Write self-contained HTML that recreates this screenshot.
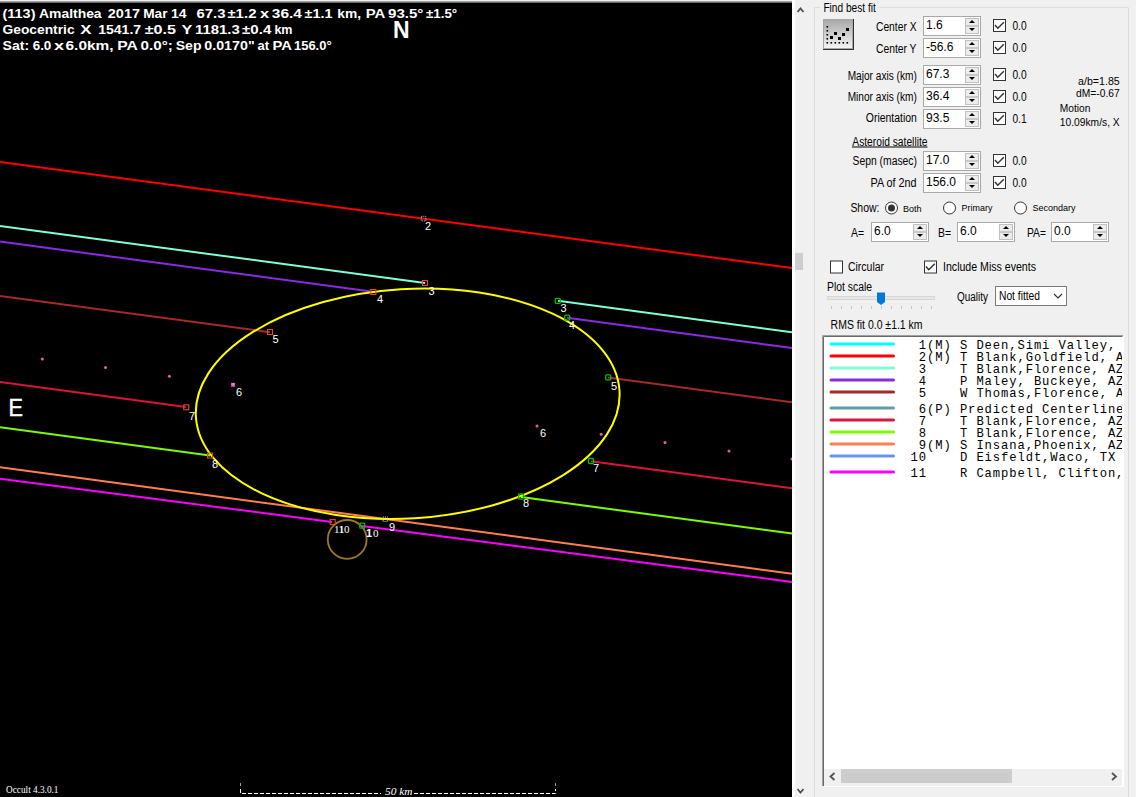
<!DOCTYPE html>
<html><head><meta charset="utf-8">
<style>
html,body{margin:0;padding:0;}
body{width:1136px;height:797px;overflow:hidden;position:relative;background:#f0f0f0;font-family:"Liberation Sans",sans-serif;}
#plot{position:absolute;left:0;top:0;width:792px;height:797px;background:#000;}
#plot svg{position:absolute;left:0;top:0;}
.a{position:absolute;}
</style></head><body>
<div id="plot"><svg width="792" height="797" viewBox="0 0 792 797" font-family="Liberation Sans"><rect x="0" y="0" width="792" height="1" fill="#f0f0f0"/>
<rect x="0" y="1" width="792" height="1" fill="#a0a0a0"/>
<rect x="0" y="2" width="792" height="1" fill="#696969"/>
<line x1="0" y1="162.0" x2="792" y2="268.1" stroke="#ff0000" stroke-width="2"/>
<line x1="0" y1="226.0" x2="425" y2="283.0" stroke="#7fffd4" stroke-width="2"/>
<line x1="558" y1="300.8" x2="792" y2="332.2" stroke="#7fffd4" stroke-width="2"/>
<line x1="0" y1="241.6" x2="373" y2="291.7" stroke="#8a2be2" stroke-width="2"/>
<line x1="567" y1="317.8" x2="792" y2="348.0" stroke="#8a2be2" stroke-width="2"/>
<line x1="0" y1="296.0" x2="270" y2="332.2" stroke="#a52a2a" stroke-width="2"/>
<line x1="608" y1="377.6" x2="792" y2="402.3" stroke="#a52a2a" stroke-width="2"/>
<line x1="0" y1="382.0" x2="186" y2="406.9" stroke="#dc143c" stroke-width="2"/>
<line x1="591" y1="461.2" x2="792" y2="488.2" stroke="#dc143c" stroke-width="2"/>
<line x1="0" y1="427.2" x2="210" y2="455.4" stroke="#7cfc00" stroke-width="2"/>
<line x1="521" y1="497.1" x2="792" y2="533.5" stroke="#7cfc00" stroke-width="2"/>
<line x1="0" y1="467.2" x2="792" y2="573.8" stroke="#ff7f50" stroke-width="2"/>
<line x1="0" y1="478.7" x2="332" y2="522.0" stroke="#ff00ff" stroke-width="2"/>
<line x1="362" y1="525.9" x2="792" y2="581.9" stroke="#ff00ff" stroke-width="2"/>
<ellipse cx="407.7" cy="403.75" rx="212.2" ry="114.7" transform="rotate(-3.5 407.7 403.75)" fill="none" stroke="#ffff00" stroke-width="2"/>
<circle cx="347.2" cy="539.4" r="19.4" fill="none" stroke="#a07828" stroke-width="1.8"/>
<g fill="#e060b0"><circle cx="42.3" cy="359" r="1.5"/><circle cx="105.5" cy="367.5" r="1.5"/><circle cx="169.4" cy="376.2" r="1.5"/><circle cx="537" cy="426" r="1.5"/><circle cx="601.2" cy="434.2" r="1.5"/><circle cx="665" cy="442.5" r="1.5"/><circle cx="729" cy="451" r="1.5"/><circle cx="792" cy="459" r="1.5"/></g>
<rect x="231.3" y="383" width="3.5" height="3.5" fill="#f070c0" stroke="#c0c0ff" stroke-width="0.5" stroke-dasharray="1 1"/>
<rect x="421.3" y="216.3" width="4.5" height="4.5" fill="none" stroke="#a8d0f0" stroke-width="1" stroke-dasharray="1 1"/>
<rect x="383" y="517" width="4.5" height="4.5" fill="none" stroke="#a8d0f0" stroke-width="1" stroke-dasharray="1 1"/>
<g fill="none" stroke="#e04828" stroke-width="1.1"><rect x="422.5" y="280.5" width="5" height="5"/><rect x="370.8" y="289.5" width="5" height="5"/><rect x="267.5" y="329.5" width="5" height="5"/><rect x="183.8" y="404.8" width="5" height="5"/><rect x="207.5" y="453.0" width="5" height="5"/><rect x="330.2" y="519.5" width="5" height="5"/></g>
<g fill="none" stroke="#00c000" stroke-width="1.3"><rect x="555.3" y="298.4" width="5" height="5" rx="1"/><rect x="564.7" y="315.2" width="5" height="5" rx="1"/><rect x="605.7" y="374.9" width="5" height="5" rx="1"/><rect x="588.5" y="458.5" width="5" height="5" rx="1"/><rect x="518.5" y="494.0" width="5" height="5" rx="1"/><rect x="359.7" y="523.2" width="5" height="5" rx="1"/></g>
<g fill="#fff" font-size="11"><text x="425" y="229.8">2</text><text x="428.5" y="295">3</text><text x="377" y="303">4</text><text x="272.5" y="343">5</text><text x="236" y="396">6</text><text x="189" y="420">7</text><text x="212" y="468">8</text><text x="560.5" y="311.8">3</text><text x="569" y="329">4</text><text x="611" y="390">5</text><text x="540" y="437">6</text><text x="593" y="472">7</text><text x="523" y="507">8</text><text x="389" y="530.5">9</text></g>
<g fill="#fff" font-family="Liberation Serif" font-size="11"><text x="334" y="532.5">11</text><text x="338.5" y="532.5">10</text><text x="373" y="536.5">0</text></g>
<text x="366" y="536.5" fill="#fff" font-size="11" font-weight="bold">1</text>
<g fill="#fff" font-weight="bold" font-size="13">
<text x="2.5" y="18" textLength="33.0" lengthAdjust="spacingAndGlyphs">(113)</text>
<text x="39.1" y="18" textLength="62.5" lengthAdjust="spacingAndGlyphs">Amalthea</text>
<text x="107.8" y="18" textLength="32.2" lengthAdjust="spacingAndGlyphs">2017</text>
<text x="143.2" y="18" textLength="24.400000000000002" lengthAdjust="spacingAndGlyphs">Mar</text>
<text x="171.1" y="18" textLength="15.5" lengthAdjust="spacingAndGlyphs">14</text>
<text x="196.5" y="18" textLength="29.1" lengthAdjust="spacingAndGlyphs">67.3</text>
<text x="227.4" y="18" textLength="29.1" lengthAdjust="spacingAndGlyphs">±1.2</text>
<text x="260.1" y="18" textLength="9.1" lengthAdjust="spacingAndGlyphs">x</text>
<text x="271.8" y="18" textLength="30.1" lengthAdjust="spacingAndGlyphs">36.4</text>
<text x="304.5" y="18" textLength="28.1" lengthAdjust="spacingAndGlyphs">±1.1</text>
<text x="337.3" y="18" textLength="23.8" lengthAdjust="spacingAndGlyphs">km,</text>
<text x="365.8" y="18" textLength="19.6" lengthAdjust="spacingAndGlyphs">PA</text>
<text x="388" y="18" textLength="35.4" lengthAdjust="spacingAndGlyphs">93.5°</text>
<text x="426" y="18" textLength="31.200000000000003" lengthAdjust="spacingAndGlyphs">±1.5°</text>
<text x="2.5" y="33.7" textLength="72.1" lengthAdjust="spacingAndGlyphs">Geocentric</text>
<text x="80.3" y="33.7" textLength="11.2" lengthAdjust="spacingAndGlyphs">X</text>
<text x="98.2" y="33.7" textLength="42.9" lengthAdjust="spacingAndGlyphs">1541.7</text>
<text x="144.7" y="33.7" textLength="31.3" lengthAdjust="spacingAndGlyphs">±0.5</text>
<text x="181.4" y="33.7" textLength="10.9" lengthAdjust="spacingAndGlyphs">Y</text>
<text x="195" y="33.7" textLength="44.800000000000004" lengthAdjust="spacingAndGlyphs">1181.3</text>
<text x="242.1" y="33.7" textLength="29.200000000000003" lengthAdjust="spacingAndGlyphs">±0.4</text>
<text x="274.4" y="33.7" textLength="18.1" lengthAdjust="spacingAndGlyphs">km</text>
<text x="2.5" y="49.7" textLength="26.6" lengthAdjust="spacingAndGlyphs">Sat:</text>
<text x="32.7" y="49.7" textLength="18.6" lengthAdjust="spacingAndGlyphs">6.0</text>
<text x="53.9" y="49.7" textLength="10.1" lengthAdjust="spacingAndGlyphs">x</text>
<text x="65.5" y="49.7" textLength="48.1" lengthAdjust="spacingAndGlyphs">6.0km,</text>
<text x="117.3" y="49.7" textLength="20.6" lengthAdjust="spacingAndGlyphs">PA</text>
<text x="140.5" y="49.7" textLength="32.3" lengthAdjust="spacingAndGlyphs">0.0°;</text>
<text x="175.7" y="49.7" textLength="25.8" lengthAdjust="spacingAndGlyphs">Sep</text>
<text x="204.3" y="49.7" textLength="50.4" lengthAdjust="spacingAndGlyphs">0.0170&quot;</text>
<text x="257.5" y="49.7" textLength="11.5" lengthAdjust="spacingAndGlyphs">at</text>
<text x="272.4" y="49.7" textLength="19.5" lengthAdjust="spacingAndGlyphs">PA</text>
<text x="294" y="49.7" textLength="37.6" lengthAdjust="spacingAndGlyphs">156.0°</text>
</g>
<text x="393" y="38" fill="#fff" font-weight="bold" font-size="23">N</text>
<text x="8.6" y="416" fill="#fff" stroke="#fff" stroke-width="0.5" font-size="23" textLength="14.4" lengthAdjust="spacingAndGlyphs">E</text>
<text x="6" y="792.7" fill="#fff" font-family="Liberation Serif" font-size="10" textLength="52.5" lengthAdjust="spacingAndGlyphs">Occult 4.3.0.1</text>
<g fill="none" stroke-width="1"><path d="M240.5 783 V788" stroke="#a0a0a0" stroke-dasharray="3 2"/><path d="M555.5 783 V788" stroke="#a0a0a0" stroke-dasharray="3 2"/><path d="M240.5 789 V793.5 H381" stroke="#fff" stroke-dasharray="4 2"/><path d="M414 793.5 H555.5 V789" stroke="#fff" stroke-dasharray="4 2"/></g>
<text x="385" y="795.4" fill="#fff" font-family="Liberation Serif" font-style="italic" font-size="11" textLength="27.6" lengthAdjust="spacingAndGlyphs">50 km</text></svg></div><svg class="a" style="left:0;top:0" width="1136" height="797" font-family="Liberation Sans"><rect x="792" y="0" width="3" height="797" fill="#fff"/>
<rect x="795" y="253" width="8" height="17" fill="#cdcdcd"/>
<path d="M797.5 12 L800.5 8.5 L803.5 12" fill="none" stroke="#505050" stroke-width="1.8"/>
<path d="M797.5 789 L800.5 792.5 L803.5 789" fill="none" stroke="#505050" stroke-width="1.8"/>
<path d="M814.5 797 V7.5 H820 M879 7.5 H1128.5 V797" fill="none" stroke="#dcdcdc"/>
<text x="823.4" y="11.9" font-size="12" text-anchor="start" fill="#000" textLength="52.4" lengthAdjust="spacingAndGlyphs">Find best fit</text>
<rect x="823" y="19" width="31" height="31" fill="#303030"/><rect x="823" y="19" width="30" height="30" fill="#a8a8a8"/>
<defs><linearGradient id="bg" x1="0" y1="0" x2="0" y2="1"><stop offset="0" stop-color="#a8a8a8"/><stop offset="1" stop-color="#f4f4f4"/></linearGradient></defs>
<rect x="824" y="20" width="28" height="28" fill="url(#bg)"/>
<g fill="#000"><rect x="826.5" y="26" width="1.6" height="1.6"/><rect x="826.5" y="30" width="1.6" height="1.6"/><rect x="826.5" y="34" width="1.6" height="1.6"/><rect x="826.5" y="38" width="1.6" height="1.6"/><rect x="826.5" y="42" width="1.6" height="1.6"/><rect x="830.5" y="42" width="1.6" height="1.6"/><rect x="834.5" y="42" width="1.6" height="1.6"/><rect x="838.5" y="42" width="1.6" height="1.6"/><rect x="842.5" y="42" width="1.6" height="1.6"/><rect x="846.5" y="42" width="1.6" height="1.6"/><rect x="830" y="36" width="3" height="3"/><rect x="834" y="32" width="3" height="3"/><rect x="838" y="37" width="3" height="3"/><rect x="842" y="33" width="3" height="3"/><rect x="846" y="28" width="3" height="3"/></g>
<text x="876.0" y="30.6" font-size="12" text-anchor="start" fill="#000" textLength="40.5" lengthAdjust="spacingAndGlyphs">Center X</text>
<text x="876.0" y="52.6" font-size="12" text-anchor="start" fill="#000" textLength="40.5" lengthAdjust="spacingAndGlyphs">Center Y</text>
<text x="847.7" y="79.5" font-size="12" text-anchor="start" fill="#000" textLength="69.1" lengthAdjust="spacingAndGlyphs">Major axis (km)</text>
<text x="847.7" y="101.3" font-size="12" text-anchor="start" fill="#000" textLength="69.1" lengthAdjust="spacingAndGlyphs">Minor axis (km)</text>
<text x="865.8" y="122.3" font-size="12" text-anchor="start" fill="#000" textLength="51" lengthAdjust="spacingAndGlyphs">Orientation</text>
<rect x="923.5" y="16.5" width="57" height="19" fill="#fff" stroke="#a9a9a9"/>
<rect x="965.5" y="18.5" width="13" height="15" fill="#ececec" stroke="#c0c0c0"/>
<rect x="966" y="25" width="12" height="2" fill="#c8c8c8"/>
<path d="M969 23 L972 20 L975 23 Z" fill="#000"/>
<path d="M969 28 L972 31 L975 28 Z" fill="#000"/>
<text x="926" y="29" font-size="12" text-anchor="start" fill="#000">1.6</text>
<rect x="993.5" y="19.5" width="12" height="12" fill="#fff" stroke="#333"/>
<path d="M995 25 L997.8 28.2 L1003.8 22.3" fill="none" stroke="#333" stroke-width="1.5"/>
<text x="1012.4" y="29.7" font-size="12" text-anchor="start" fill="#000" textLength="14.2" lengthAdjust="spacingAndGlyphs">0.0</text>
<rect x="923.5" y="38.5" width="57" height="19" fill="#fff" stroke="#a9a9a9"/>
<rect x="965.5" y="40.5" width="13" height="15" fill="#ececec" stroke="#c0c0c0"/>
<rect x="966" y="47" width="12" height="2" fill="#c8c8c8"/>
<path d="M969 45 L972 42 L975 45 Z" fill="#000"/>
<path d="M969 50 L972 53 L975 50 Z" fill="#000"/>
<text x="926" y="51" font-size="12" text-anchor="start" fill="#000">-56.6</text>
<rect x="993.5" y="41.5" width="12" height="12" fill="#fff" stroke="#333"/>
<path d="M995 47 L997.8 50.2 L1003.8 44.3" fill="none" stroke="#333" stroke-width="1.5"/>
<text x="1012.4" y="51.7" font-size="12" text-anchor="start" fill="#000" textLength="14.2" lengthAdjust="spacingAndGlyphs">0.0</text>
<rect x="923.5" y="65.5" width="57" height="19" fill="#fff" stroke="#a9a9a9"/>
<rect x="965.5" y="67.5" width="13" height="15" fill="#ececec" stroke="#c0c0c0"/>
<rect x="966" y="74" width="12" height="2" fill="#c8c8c8"/>
<path d="M969 72 L972 69 L975 72 Z" fill="#000"/>
<path d="M969 77 L972 80 L975 77 Z" fill="#000"/>
<text x="926" y="78" font-size="12" text-anchor="start" fill="#000">67.3</text>
<rect x="993.5" y="68.5" width="12" height="12" fill="#fff" stroke="#333"/>
<path d="M995 74 L997.8 77.2 L1003.8 71.3" fill="none" stroke="#333" stroke-width="1.5"/>
<text x="1012.4" y="78.7" font-size="12" text-anchor="start" fill="#000" textLength="14.2" lengthAdjust="spacingAndGlyphs">0.0</text>
<rect x="923.5" y="87.5" width="57" height="19" fill="#fff" stroke="#a9a9a9"/>
<rect x="965.5" y="89.5" width="13" height="15" fill="#ececec" stroke="#c0c0c0"/>
<rect x="966" y="96" width="12" height="2" fill="#c8c8c8"/>
<path d="M969 94 L972 91 L975 94 Z" fill="#000"/>
<path d="M969 99 L972 102 L975 99 Z" fill="#000"/>
<text x="926" y="100" font-size="12" text-anchor="start" fill="#000">36.4</text>
<rect x="993.5" y="90.5" width="12" height="12" fill="#fff" stroke="#333"/>
<path d="M995 96 L997.8 99.2 L1003.8 93.3" fill="none" stroke="#333" stroke-width="1.5"/>
<text x="1012.4" y="100.7" font-size="12" text-anchor="start" fill="#000" textLength="14.2" lengthAdjust="spacingAndGlyphs">0.0</text>
<rect x="923.5" y="109.5" width="57" height="19" fill="#fff" stroke="#a9a9a9"/>
<rect x="965.5" y="111.5" width="13" height="15" fill="#ececec" stroke="#c0c0c0"/>
<rect x="966" y="118" width="12" height="2" fill="#c8c8c8"/>
<path d="M969 116 L972 113 L975 116 Z" fill="#000"/>
<path d="M969 121 L972 124 L975 121 Z" fill="#000"/>
<text x="926" y="122" font-size="12" text-anchor="start" fill="#000">93.5</text>
<rect x="993.5" y="112.5" width="12" height="12" fill="#fff" stroke="#333"/>
<path d="M995 118 L997.8 121.2 L1003.8 115.3" fill="none" stroke="#333" stroke-width="1.5"/>
<text x="1012.4" y="122.7" font-size="12" text-anchor="start" fill="#000" textLength="14.2" lengthAdjust="spacingAndGlyphs">0.1</text>
<text x="1078.1" y="84.7" font-size="10.5" text-anchor="start" fill="#000" textLength="41.6" lengthAdjust="spacingAndGlyphs">a/b=1.85</text>
<text x="1076.1" y="97.3" font-size="10.5" text-anchor="start" fill="#000" textLength="43.6" lengthAdjust="spacingAndGlyphs">dM=-0.67</text>
<text x="1059.8" y="112.4" font-size="10.5" text-anchor="start" fill="#000" textLength="30.6" lengthAdjust="spacingAndGlyphs">Motion</text>
<text x="1059.8" y="126.3" font-size="10.5" text-anchor="start" fill="#000" textLength="59.9" lengthAdjust="spacingAndGlyphs">10.09km/s, X</text>
<text x="852.3" y="145.5" font-size="12" text-anchor="start" fill="#000" textLength="75.2" lengthAdjust="spacingAndGlyphs">Asteroid satellite</text>
<rect x="852" y="146.5" width="75.5" height="1" fill="#000"/>
<text x="852.5" y="164.5" font-size="12" text-anchor="start" fill="#000" textLength="64.5" lengthAdjust="spacingAndGlyphs">Sepn (masec)</text>
<text x="870.5" y="187" font-size="12" text-anchor="start" fill="#000" textLength="46" lengthAdjust="spacingAndGlyphs">PA of 2nd</text>
<rect x="923.5" y="151.5" width="57" height="19" fill="#fff" stroke="#a9a9a9"/>
<rect x="965.5" y="153.5" width="13" height="15" fill="#ececec" stroke="#c0c0c0"/>
<rect x="966" y="160" width="12" height="2" fill="#c8c8c8"/>
<path d="M969 158 L972 155 L975 158 Z" fill="#000"/>
<path d="M969 163 L972 166 L975 163 Z" fill="#000"/>
<text x="926" y="164" font-size="12" text-anchor="start" fill="#000">17.0</text>
<rect x="993.5" y="154.5" width="12" height="12" fill="#fff" stroke="#333"/>
<path d="M995 160 L997.8 163.2 L1003.8 157.3" fill="none" stroke="#333" stroke-width="1.5"/>
<text x="1012.4" y="164.7" font-size="12" text-anchor="start" fill="#000" textLength="14.2" lengthAdjust="spacingAndGlyphs">0.0</text>
<rect x="923.5" y="173.5" width="57" height="19" fill="#fff" stroke="#a9a9a9"/>
<rect x="965.5" y="175.5" width="13" height="15" fill="#ececec" stroke="#c0c0c0"/>
<rect x="966" y="182" width="12" height="2" fill="#c8c8c8"/>
<path d="M969 180 L972 177 L975 180 Z" fill="#000"/>
<path d="M969 185 L972 188 L975 185 Z" fill="#000"/>
<text x="926" y="186" font-size="12" text-anchor="start" fill="#000">156.0</text>
<rect x="993.5" y="176.5" width="12" height="12" fill="#fff" stroke="#333"/>
<path d="M995 182 L997.8 185.2 L1003.8 179.3" fill="none" stroke="#333" stroke-width="1.5"/>
<text x="1012.4" y="186.7" font-size="12" text-anchor="start" fill="#000" textLength="14.2" lengthAdjust="spacingAndGlyphs">0.0</text>
<text x="850.4" y="212.2" font-size="12" text-anchor="start" fill="#000" textLength="29" lengthAdjust="spacingAndGlyphs">Show:</text>
<circle cx="891.5" cy="208.0" r="6" fill="#fff" stroke="#333" stroke-width="1"/>
<circle cx="891.5" cy="208.0" r="3.5" fill="#333"/>
<text x="903" y="211.5" font-size="9.5" text-anchor="start" fill="#000" textLength="18.5" lengthAdjust="spacingAndGlyphs">Both</text>
<circle cx="949.5" cy="208.0" r="6" fill="#fff" stroke="#333" stroke-width="1"/>
<text x="961.6" y="211.3" font-size="9.5" text-anchor="start" fill="#000" textLength="30.8" lengthAdjust="spacingAndGlyphs">Primary</text>
<circle cx="1020.5" cy="208.0" r="6" fill="#fff" stroke="#333" stroke-width="1"/>
<text x="1032.4" y="211.3" font-size="9.5" text-anchor="start" fill="#000" textLength="43.2" lengthAdjust="spacingAndGlyphs">Secondary</text>
<text x="851" y="236.6" font-size="12" text-anchor="start" fill="#000" textLength="13" lengthAdjust="spacingAndGlyphs">A=</text>
<text x="938" y="236.6" font-size="12" text-anchor="start" fill="#000" textLength="13" lengthAdjust="spacingAndGlyphs">B=</text>
<text x="1027" y="236.6" font-size="12" text-anchor="start" fill="#000" textLength="19" lengthAdjust="spacingAndGlyphs">PA=</text>
<rect x="871.5" y="222.5" width="57" height="19" fill="#fff" stroke="#a9a9a9"/>
<rect x="913.5" y="224.5" width="13" height="15" fill="#ececec" stroke="#c0c0c0"/>
<rect x="914" y="231" width="12" height="2" fill="#c8c8c8"/>
<path d="M917 229 L920 226 L923 229 Z" fill="#000"/>
<path d="M917 234 L920 237 L923 234 Z" fill="#000"/>
<text x="874" y="235" font-size="12" text-anchor="start" fill="#000">6.0</text>
<rect x="957.5" y="222.5" width="57" height="19" fill="#fff" stroke="#a9a9a9"/>
<rect x="999.5" y="224.5" width="13" height="15" fill="#ececec" stroke="#c0c0c0"/>
<rect x="1000" y="231" width="12" height="2" fill="#c8c8c8"/>
<path d="M1003 229 L1006 226 L1009 229 Z" fill="#000"/>
<path d="M1003 234 L1006 237 L1009 234 Z" fill="#000"/>
<text x="960" y="235" font-size="12" text-anchor="start" fill="#000">6.0</text>
<rect x="1051.5" y="222.5" width="57" height="19" fill="#fff" stroke="#a9a9a9"/>
<rect x="1093.5" y="224.5" width="13" height="15" fill="#ececec" stroke="#c0c0c0"/>
<rect x="1094" y="231" width="12" height="2" fill="#c8c8c8"/>
<path d="M1097 229 L1100 226 L1103 229 Z" fill="#000"/>
<path d="M1097 234 L1100 237 L1103 234 Z" fill="#000"/>
<text x="1054" y="235" font-size="12" text-anchor="start" fill="#000">0.0</text>
<rect x="830.5" y="261.0" width="12" height="12" fill="#fff" stroke="#333"/>
<text x="848" y="271" font-size="12" text-anchor="start" fill="#000" textLength="36" lengthAdjust="spacingAndGlyphs">Circular</text>
<rect x="924.5" y="261.0" width="12" height="12" fill="#fff" stroke="#333"/>
<path d="M926 266.5 L928.8 269.7 L934.8 263.8" fill="none" stroke="#333" stroke-width="1.5"/>
<text x="943" y="271" font-size="12" text-anchor="start" fill="#000" textLength="93" lengthAdjust="spacingAndGlyphs">Include Miss events</text>
<text x="827" y="290.7" font-size="12" text-anchor="start" fill="#000" textLength="45" lengthAdjust="spacingAndGlyphs">Plot scale</text>
<rect x="827.5" y="296.5" width="107" height="3" fill="#e7e7e7" stroke="#d6d6d6"/>
<path d="M877 292.5 H885 V302 L881 305 L877 302 Z" fill="#0078d7"/>
<g stroke="#c4c4c4"><path d="M831.5 306 V309"/><path d="M841.5 306 V309"/><path d="M851.5 306 V309"/><path d="M861.5 306 V309"/><path d="M871.5 306 V309"/><path d="M881.5 306 V309"/><path d="M891.5 306 V309"/><path d="M901.5 306 V309"/><path d="M911.5 306 V309"/><path d="M921.5 306 V309"/><path d="M931.5 306 V309"/></g>
<text x="957" y="300.8" font-size="12" text-anchor="start" fill="#000" textLength="31" lengthAdjust="spacingAndGlyphs">Quality</text>
<rect x="995.5" y="286.5" width="71" height="19" fill="#fff" stroke="#7a7a7a"/>
<text x="999" y="300" font-size="12" text-anchor="start" fill="#000" textLength="41" lengthAdjust="spacingAndGlyphs">Not fitted</text>
<path d="M1054 294 L1058 298 L1062 294" fill="none" stroke="#333" stroke-width="1.2"/>
<text x="830.6" y="328.5" font-size="12" text-anchor="start" fill="#000" textLength="92" lengthAdjust="spacingAndGlyphs">RMS fit 0.0 ±1.1 km</text>
<rect x="823" y="336" width="300" height="450" fill="#fff"/>
<path d="M822.5 786 V335.5 H1123" fill="none" stroke="#a0a0a0"/>
<path d="M823.5 786 V336.5 H1122.5" fill="none" stroke="#696969"/>
<path d="M823.5 786.5 H1123.5 V336" fill="none" stroke="#ffffff"/>
<clipPath id="lbc"><rect x="824" y="337" width="298" height="432"/></clipPath><g clip-path="url(#lbc)">
<rect x="829.5" y="342.5" width="65.5" height="3" rx="1.5" fill="#00ffff"/>
<text x="910.6 918.8 927.0 935.3 943.5 951.7 959.9 968.1 976.4 984.6 992.8 1001.0 1009.2 1017.5 1025.7 1033.9 1042.1 1050.3 1058.6 1066.8 1075.0 1083.2 1091.4 1099.7 1107.9 1116.1 1124.3 1132.5" y="349" font-family="Liberation Mono" font-size="12.2" fill="#000" xml:space="preserve"> 1(M) S Deen,Simi Valley, CA</text>
<rect x="829.5" y="354.5" width="65.5" height="3" rx="1.5" fill="#ff0000"/>
<text x="910.6 918.8 927.0 935.3 943.5 951.7 959.9 968.1 976.4 984.6 992.8 1001.0 1009.2 1017.5 1025.7 1033.9 1042.1 1050.3 1058.6 1066.8 1075.0 1083.2 1091.4 1099.7 1107.9 1116.1 1124.3" y="361" font-family="Liberation Mono" font-size="12.2" fill="#000" xml:space="preserve"> 2(M) T Blank,Goldfield, AZ</text>
<rect x="829.5" y="366.5" width="65.5" height="3" rx="1.5" fill="#7fffd4"/>
<text x="910.6 918.8 927.0 935.3 943.5 951.7 959.9 968.1 976.4 984.6 992.8 1001.0 1009.2 1017.5 1025.7 1033.9 1042.1 1050.3 1058.6 1066.8 1075.0 1083.2 1091.4 1099.7 1107.9 1116.1" y="373" font-family="Liberation Mono" font-size="12.2" fill="#000" xml:space="preserve"> 3    T Blank,Florence, AZ</text>
<rect x="829.5" y="378.5" width="65.5" height="3" rx="1.5" fill="#8a2be2"/>
<text x="910.6 918.8 927.0 935.3 943.5 951.7 959.9 968.1 976.4 984.6 992.8 1001.0 1009.2 1017.5 1025.7 1033.9 1042.1 1050.3 1058.6 1066.8 1075.0 1083.2 1091.4 1099.7 1107.9 1116.1" y="385" font-family="Liberation Mono" font-size="12.2" fill="#000" xml:space="preserve"> 4    P Maley, Buckeye, AZ</text>
<rect x="829.5" y="390.5" width="65.5" height="3" rx="1.5" fill="#a52a2a"/>
<text x="910.6 918.8 927.0 935.3 943.5 951.7 959.9 968.1 976.4 984.6 992.8 1001.0 1009.2 1017.5 1025.7 1033.9 1042.1 1050.3 1058.6 1066.8 1075.0 1083.2 1091.4 1099.7 1107.9 1116.1 1124.3" y="397" font-family="Liberation Mono" font-size="12.2" fill="#000" xml:space="preserve"> 5    W Thomas,Florence, AZ</text>
<rect x="829.5" y="406.5" width="65.5" height="3" rx="1.5" fill="#5f9ea0"/>
<text x="910.6 918.8 927.0 935.3 943.5 951.7 959.9 968.1 976.4 984.6 992.8 1001.0 1009.2 1017.5 1025.7 1033.9 1042.1 1050.3 1058.6 1066.8 1075.0 1083.2 1091.4 1099.7 1107.9 1116.1" y="413" font-family="Liberation Mono" font-size="12.2" fill="#000" xml:space="preserve"> 6(P) Predicted Centerline</text>
<rect x="829.5" y="418.5" width="65.5" height="3" rx="1.5" fill="#dc143c"/>
<text x="910.6 918.8 927.0 935.3 943.5 951.7 959.9 968.1 976.4 984.6 992.8 1001.0 1009.2 1017.5 1025.7 1033.9 1042.1 1050.3 1058.6 1066.8 1075.0 1083.2 1091.4 1099.7 1107.9 1116.1" y="425" font-family="Liberation Mono" font-size="12.2" fill="#000" xml:space="preserve"> 7    T Blank,Florence, AZ</text>
<rect x="829.5" y="430.5" width="65.5" height="3" rx="1.5" fill="#7cfc00"/>
<text x="910.6 918.8 927.0 935.3 943.5 951.7 959.9 968.1 976.4 984.6 992.8 1001.0 1009.2 1017.5 1025.7 1033.9 1042.1 1050.3 1058.6 1066.8 1075.0 1083.2 1091.4 1099.7 1107.9 1116.1" y="437" font-family="Liberation Mono" font-size="12.2" fill="#000" xml:space="preserve"> 8    T Blank,Florence, AZ</text>
<rect x="829.5" y="442.5" width="65.5" height="3" rx="1.5" fill="#ff7f50"/>
<text x="910.6 918.8 927.0 935.3 943.5 951.7 959.9 968.1 976.4 984.6 992.8 1001.0 1009.2 1017.5 1025.7 1033.9 1042.1 1050.3 1058.6 1066.8 1075.0 1083.2 1091.4 1099.7 1107.9 1116.1" y="449" font-family="Liberation Mono" font-size="12.2" fill="#000" xml:space="preserve"> 9(M) S Insana,Phoenix, AZ</text>
<rect x="829.5" y="454.5" width="65.5" height="3" rx="1.5" fill="#6495ed"/>
<text x="910.6 918.8 927.0 935.3 943.5 951.7 959.9 968.1 976.4 984.6 992.8 1001.0 1009.2 1017.5 1025.7 1033.9 1042.1 1050.3 1058.6 1066.8 1075.0 1083.2 1091.4 1099.7 1107.9" y="461" font-family="Liberation Mono" font-size="12.2" fill="#000" xml:space="preserve">10    D Eisfeldt,Waco, TX</text>
<rect x="829.5" y="470.5" width="65.5" height="3" rx="1.5" fill="#ff00ff"/>
<text x="910.6 918.8 927.0 935.3 943.5 951.7 959.9 968.1 976.4 984.6 992.8 1001.0 1009.2 1017.5 1025.7 1033.9 1042.1 1050.3 1058.6 1066.8 1075.0 1083.2 1091.4 1099.7 1107.9 1116.1 1124.3 1132.5 1140.8" y="477" font-family="Liberation Mono" font-size="12.2" fill="#000" xml:space="preserve">11    R Campbell, Clifton, AZ</text>
</g>
<rect x="824" y="769" width="298" height="17" fill="#f0f0f0"/>
<rect x="841" y="769" width="171" height="14" fill="#cdcdcd"/>
<path d="M834.5 773 L830.5 776.5 L834.5 780" fill="none" stroke="#505050" stroke-width="1.8"/>
<path d="M1112 773 L1116 776.5 L1112 780" fill="none" stroke="#505050" stroke-width="1.8"/></svg>
</body></html>
